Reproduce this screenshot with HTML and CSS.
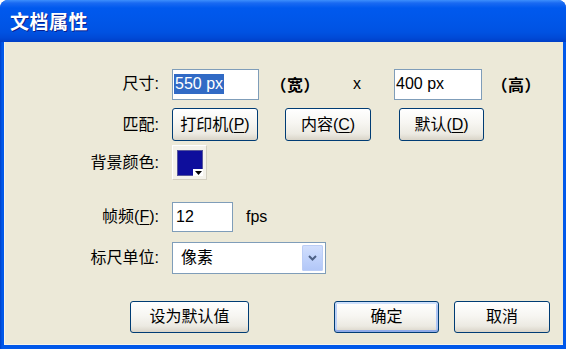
FILE: index.html
```html
<!DOCTYPE html>
<html lang="zh-CN">
<head>
<meta charset="utf-8">
<title>文档属性</title>
<link rel="stylesheet" href="styles.css">
</head>
<body>
<div class="window">
  <div class="titlebar"><span class="title">文档属性</span></div>
  <div class="frame">
    <div class="client">
      <div class="row r1">
        <div class="label">尺寸:</div>
        <div class="tb w1"><span class="sel">550 px</span></div>
        <span class="paren p1"><span class="pl">（</span><span>宽</span><span class="pr">）</span></span>
        <span class="times">x</span>
        <div class="tb w2"><span>400 px</span></div>
        <span class="paren p2"><span class="pl">（</span><span>高</span><span class="pr">）</span></span>
      </div>
      <div class="row r2">
        <div class="label">匹配:</div>
        <button class="btn b1">打印机(<u>P</u>)</button>
        <button class="btn b2">内容(<u>C</u>)</button>
        <button class="btn b3">默认(<u>D</u>)</button>
      </div>
      <div class="row r3">
        <div class="label">背景颜色:</div>
        <div class="swatch">
          <div class="color"><span class="notch"><svg width="7" height="4" viewBox="0 0 7 4"><path d="M0 0H7L3.5 4Z" fill="#000"/></svg></span></div>
        </div>
      </div>
      <div class="row r4">
        <div class="label">帧频(<u>F</u>):</div>
        <div class="tb w3"><span>12</span></div>
        <span class="unit">fps</span>
      </div>
      <div class="row r5">
        <div class="label">标尺单位:</div>
        <div class="select">
          <span class="opt">像素</span>
          <span class="drop"><svg width="9" height="6" viewBox="0 0 9 6"><path d="M1 1L4.5 4.5L8 1" fill="none" stroke="#4D6185" stroke-width="2"/></svg></span>
        </div>
      </div>
      <div class="footer">
        <button class="btn f1">设为默认值</button>
        <button class="btn f2 default">确定</button>
        <button class="btn f3">取消</button>
      </div>
    </div>
  </div>
</div>
</body>
</html>
```
FILE: styles.css
```css
html, body {
  margin: 0;
  padding: 0;
  background: #ffffff;
}
body {
  width: 566px;
  height: 349px;
  overflow: hidden;
  font-family: "Liberation Sans", "Noto Sans CJK SC", sans-serif;
  font-size: 16px;
  color: #000;
  text-spacing-trim: space-all;
}
.window {
  width: 566px;
  height: 349px;
  display: flex;
  flex-direction: column;
  border-radius: 8px 8px 0 0;
  overflow: hidden;
  background: #0052E2;
}
.titlebar {
  height: 42px;
  flex: none;
  display: flex;
  align-items: center;
  padding-left: 10px;
  background: linear-gradient(180deg, #3D8FFC 0px, #1A6AF2 3px, #0059EE 8px, #0056E8 22px, #0052E2 32px, #0049D6 38px, #003FC6 42px);
}
.title {
  color: #fff;
  font-family: "Noto Sans CJK SC", sans-serif;
  font-weight: bold;
  font-size: 19px;
  line-height: 24px;
  letter-spacing: 0.5px;
  text-shadow: 1px 1px 0 #0A1E8A;
  margin-top: -1px;
}
.frame {
  flex: 1;
  display: flex;
  padding: 0 3px 4px 4px;
  background: linear-gradient(90deg, #0040C8 0, #0058EA 2px, #0058EA 100%);
}
.client {
  flex: 1;
  background: #ECE9D8;
  border-left: 1px solid #F6F4EC;
  border-bottom: 1px solid #F6F4EC;
  display: flex;
  flex-direction: column;
}
.row {
  display: flex;
  align-items: center;
  flex: none;
}
.label {
  width: 154px;
  margin-right: 13px;
  text-align: right;
  flex: none;
  line-height: 20px;
}
.r1 { margin-top: 26px; height: 32px; }
.r2 { margin-top: 8px; height: 33px; }
.r3 { margin-top: 4px; height: 35px; }
.r4 { margin-top: 22px; height: 30px; }
.r5 { margin-top: 10px; height: 32px; }

.tb {
  box-sizing: border-box;
  height: 31px;
  border: 1px solid #7F9DB9;
  background: #fff;
  display: flex;
  align-items: center;
  padding-left: 1px;
  flex: none;
  line-height: 20px;
}
.r4 .tb { height: 30px; }
.w1 { width: 87px; }
.w2 { width: 88px; }
.w3 { width: 61px; padding-left: 3px; }
.sel {
  background: #316AC5;
  color: #fff;
  padding: 0 1px;
}
.paren {
  display: flex;
  width: 50px;
  font-family: "Noto Sans CJK SC", sans-serif;
  font-weight: bold;
  line-height: 20px;
}
.pl, .pr {
  width: 17px;
  display: flex;
  justify-content: center;
}
.p1 { margin-left: 11px; }
.p2 { margin-left: 9px; }
.times {
  width: 74px;
  text-align: center;
  line-height: 20px;
}
.btn {
  box-sizing: border-box;
  height: 33px;
  padding: 0;
  border: 1px solid #003C74;
  border-radius: 3px;
  background: linear-gradient(180deg, #FFFFFF 0%, #F7F6F2 45%, #ECEAE2 80%, #D9D4C8 100%);
  font: inherit;
  color: #000;
  line-height: 20px;
  display: flex;
  align-items: center;
  justify-content: center;
  flex: none;
}
.b1 { width: 86px; }
.b2 { width: 86px; margin-left: 27px; }
.b3 { width: 85px; margin-left: 28px; }

.swatch {
  box-sizing: border-box;
  width: 35px;
  height: 35px;
  padding: 4px 3px 3px 4px;
  border: 1px solid;
  border-color: #FFFFFF #D3CFC0 #D3CFC0 #FFFFFF;
  background: #F4F2EA;
  flex: none;
}
.color {
  position: relative;
  width: 26px;
  height: 26px;
  background: #0E0E9C;
  border: 1px solid #56569C;
  box-sizing: border-box;
}
.notch {
  position: absolute;
  right: -1px;
  bottom: -1px;
  width: 10px;
  height: 7px;
  background: #fff;
  display: flex;
  align-items: center;
  justify-content: center;
}
.unit {
  margin-left: 13px;
  line-height: 20px;
}
.select {
  box-sizing: border-box;
  width: 154px;
  height: 32px;
  border: 1px solid #7F9DB9;
  background: #fff;
  display: flex;
  align-items: center;
  justify-content: space-between;
  padding: 0 2px 0 8px;
  flex: none;
}
.opt { line-height: 20px; }
.drop {
  width: 21px;
  height: 26px;
  border-radius: 2px;
  background: linear-gradient(180deg, #D3E0FD 0%, #C1D3FB 50%, #B1C6F7 100%);
  box-shadow: inset 0 0 0 1px #BBCDF5;
  display: flex;
  align-items: center;
  justify-content: center;
}
.footer {
  display: flex;
  margin-top: 27px;
  height: 32px;
}
.footer .btn { height: 32px; }
.f1 { width: 119px; margin-left: 125px; }
.f2 { width: 105px; margin-left: 85px; }
.f3 { width: 96px; margin-left: 15px; }
.default {
  box-shadow: inset 0 2px 0 #CEE0FC, inset 0 -2px 0 #8FAAE8, inset 2px 0 0 #BCD1F7, inset -2px 0 0 #AEC5F3;
}
u { text-decoration: underline; text-underline-offset: 2px; }
```
